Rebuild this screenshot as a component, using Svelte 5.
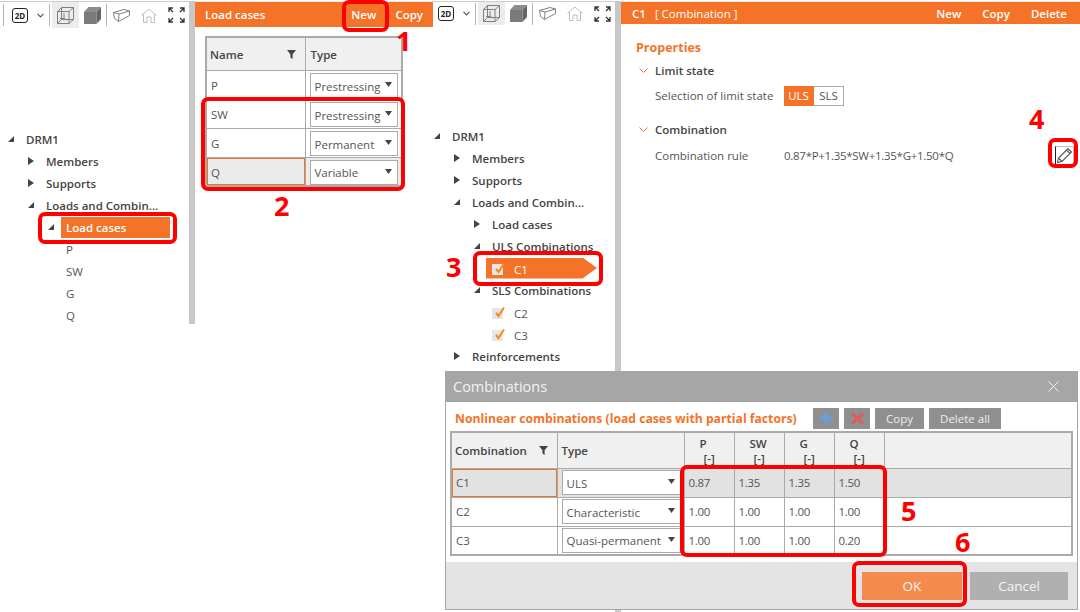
<script>
  const tree1 = [
    { t: 'DRM1', lvl: 0, arrow: 'open', bold: true },
    { t: 'Members', lvl: 1, arrow: 'closed', bold: true },
    { t: 'Supports', lvl: 1, arrow: 'closed', bold: true },
    { t: 'Loads and Combin...', lvl: 1, arrow: 'open', bold: true },
    { t: 'Load cases', lvl: 2, arrow: 'open', bold: true, sel: true },
    { t: 'P', lvl: 2 },
    { t: 'SW', lvl: 2 },
    { t: 'G', lvl: 2 },
    { t: 'Q', lvl: 2 }
  ];
  const tree2 = [
    { t: 'DRM1', lvl: 0, arrow: 'open', bold: true },
    { t: 'Members', lvl: 1, arrow: 'closed', bold: true },
    { t: 'Supports', lvl: 1, arrow: 'closed', bold: true },
    { t: 'Loads and Combin...', lvl: 1, arrow: 'open', bold: true },
    { t: 'Load cases', lvl: 2, arrow: 'closed', bold: true },
    { t: 'ULS Combinations', lvl: 2, arrow: 'open', bold: true },
    { t: 'C1', lvl: 2, check: true, tag: true },
    { t: 'SLS Combinations', lvl: 2, arrow: 'open', bold: true },
    { t: 'C2', lvl: 2, check: true },
    { t: 'C3', lvl: 2, check: true },
    { t: 'Reinforcements', lvl: 1, arrow: 'closed', bold: true }
  ];
  const cases = [
    { n: 'P', ty: 'Prestressing' },
    { n: 'SW', ty: 'Prestressing' },
    { n: 'G', ty: 'Permanent' },
    { n: 'Q', ty: 'Variable', active: true }
  ];
  const combos = [
    { n: 'C1', ty: 'ULS', v: ['0.87', '1.35', '1.35', '1.50'], active: true },
    { n: 'C2', ty: 'Characteristic', v: ['1.00', '1.00', '1.00', '1.00'] },
    { n: 'C3', ty: 'Quasi-permanent', v: ['1.00', '1.00', '1.00', '0.20'] }
  ];
  const factors = ['P', 'SW', 'G', 'Q'];
</script>

{#snippet caret()}
  <svg class="caret" width="7" height="5" viewBox="0 0 7 5"><path d="M0 0h7L3.5 5z" fill="#444" /></svg>
{/snippet}

{#snippet funnel()}
  <svg class="funnel" width="9" height="9" viewBox="0 0 9 9"><path d="M0 0h9L5.6 4.2V9L3.4 7.6V4.2z" fill="#444" /></svg>
{/snippet}

{#snippet toolbar(lead)}
  <div class="tools">
    {#if lead}<span class="sep lead"></span>{/if}
    <span class="icon2d">2D</span>
    <svg class="chev" width="7" height="5" viewBox="0 0 7 5"><path d="M.5.8 3.5 3.8 6.5.8" fill="none" stroke="#555" stroke-width="1.2" /></svg>
    <span class="sep s1"></span>
    <span class="hi">
      <svg width="17" height="17" viewBox="0 0 17 17" fill="none" stroke="#808080"><path d="M.5 4.500h11.500v12H.5zM4.500.5h12v12H4.500zM.5 4.500l4-4M12 4.500l4.500-4M12 16.500l4.500-4M.5 16.500l4-4M7 6v5.500H3M7 11.500l3 1.500" /></svg>
    </span>
    <svg class="cube" width="17" height="17" viewBox="0 0 17 17"><path d="M0 5h12.500v12H0z" fill="#7a7a7a" /><path d="M0 5l4.500-5H17l-4.500 5z" fill="#8c8c8c" /><path d="M12.500 5 17 0v12l-4.500 5z" fill="#666" /></svg>
    <span class="sep s2"></span>
    <svg class="beam" width="17" height="13" viewBox="0 0 17 13" fill="none" stroke="#808080"><path d="M.5 3.500 11 .5l5.500 1.500L6 5zM.5 3.500 1.500 9.500 5.500 12.500 6 5M5.500 12.500l11-6V2" /></svg>
    <svg class="home" width="16" height="15" viewBox="0 0 16 15" fill="none" stroke="#bdbdbd"><path d="M.5 7.500 8 1l7.500 6.500M2.500 6v8.500h3.500V9h4v5.500h3.500V6" /></svg>
    <svg class="expand" width="17" height="16" viewBox="0 0 17 16" fill="none" stroke="#333" stroke-width="1.300"><path d="M1 5V1h4M1 1l4 4M12 1h4v4M16 1l-4 4M1 11v4h4M1 15l4-4M12 15h4v-4M16 15l-4-4" /></svg>
  </div>
{/snippet}

{#snippet treeRows(rows)}
  <div class="tree">
    {#each rows as r}
      <div class="row" class:l1={r.lvl === 1} class:l2={r.lvl === 2}>
        <span class="arrowbox">
          {#if r.arrow === 'closed'}
            <svg width="6" height="8" viewBox="0 0 6 8"><path d="M0 0l6 4-6 4z" fill="#444" /></svg>
          {:else if r.arrow === 'open'}
            <svg width="6" height="6" viewBox="0 0 6 6"><path d="M6 0v6H0z" fill="#444" /></svg>
          {/if}
        </span>
        {#if r.check}
          <span class="entry" class:tag={r.tag}>
            <span class="check">
              <svg width="13" height="13" viewBox="0 0 13 13"><path d="M3 7l2.500 3L11 1.500" fill="none" stroke="#f5891f" stroke-width="2" /></svg>
            </span>
            <span class="ctext">{r.t}</span>
          </span>
        {:else}
          <span class="entry" class:b={r.bold} class:sel={r.sel}>{r.t}</span>
        {/if}
      </div>
    {/each}
  </div>
{/snippet}

<div class="screen">
  <section class="pane p1">
    {@render toolbar(true)}
    {@render treeRows(tree1)}
  </section>
  <div class="sb short"></div>

  <section class="pane p2">
    <header class="bar tall">
      <strong class="title">Load cases</strong>
      <span class="acts"><b>New</b><b>Copy</b></span>
    </header>
    <table class="lc">
      <thead>
        <tr>
          <th class="cn"><span class="hcell">Name{@render funnel()}</span></th>
          <th class="ty">Type</th>
        </tr>
      </thead>
      <tbody>
        {#each cases as c}
          <tr class:on={c.active}>
            <td class="namec" class:focus={c.active}>{c.n}</td>
            <td><div class="sel-box"><span>{c.ty}</span>{@render caret()}</div></td>
          </tr>
        {/each}
      </tbody>
    </table>
  </section>

  <section class="pane p3">
    {@render toolbar(false)}
    {@render treeRows(tree2)}
  </section>
  <div class="sb"></div>

  <section class="pane p4">
    <header class="bar">
      <strong class="title c1">C1</strong>
      <span class="kind">[ Combination ]</span>
      <span class="acts wide"><b>New</b><b>Copy</b><b>Delete</b></span>
    </header>
    <div class="props">
      <h3>Properties</h3>
      <div class="group">
        <svg width="9" height="5" viewBox="0 0 9 5"><path d="M.5.5l4 4 4-4" fill="none" stroke="#f47a30" /></svg>
        <span>Limit state</span>
      </div>
      <div class="prop first">
        <span class="lab">Selection of limit state</span>
        <span class="toggle"><span class="on">ULS</span><span>SLS</span></span>
      </div>
      <div class="group second">
        <svg width="9" height="5" viewBox="0 0 9 5"><path d="M.5.5l4 4 4-4" fill="none" stroke="#f47a30" /></svg>
        <span>Combination</span>
      </div>
      <div class="prop rule">
        <span class="lab">Combination rule</span>
        <span class="val">0.87*P+1.35*SW+1.35*G+1.50*Q</span>
        <span class="edit">
          <svg width="17" height="17" viewBox="0 0 17 17" fill="none" stroke="#555" stroke-width="1.100"><path d="M1.500 15.500l1-4.500L12 1.500l3.500 3.500-9.500 9.500zM2.500 11l3.500 3.500M10.500 3l3.500 3.500" /></svg>
        </span>
      </div>
    </div>
  </section>

  <div class="dialog">
    <div class="dtitle">
      <span>Combinations</span>
      <svg width="11" height="11" viewBox="0 0 11 11"><path d="M.5.500l10 10M10.500.500l-10 10" stroke="#f4f4f4" /></svg>
    </div>
    <div class="dbody">
      <div class="dhead">
        <strong>Nonlinear combinations (load cases with partial factors)</strong>
        <span class="dbtns">
          <span class="dbtn sq">
            <svg width="13" height="13" viewBox="0 0 13 13"><path d="M4.500 0h4v4.500H13v4H8.500V13h-4V8.500H0v-4h4.500z" fill="#6f9bd3" /></svg>
          </span>
          <span class="dbtn sq">
            <svg width="13" height="13" viewBox="0 0 13 13"><path d="M2 .500l4.500 4 4.500-4 2 2-4 4 4 4-2 2-4.500-4-4.500 4-2-2 4-4-4-4z" fill="#e35a5e" /></svg>
          </span>
          <span class="dbtn copy">Copy</span>
          <span class="dbtn del">Delete all</span>
        </span>
      </div>
      <table class="ct">
        <thead>
          <tr>
            <th class="c-n"><span class="hcell">Combination{@render funnel()}</span></th>
            <th class="c-t">Type</th>
            {#each factors as f}
              <th class="c-f"><span class="f1">{f}</span><span class="f2">[-]</span></th>
            {/each}
            <th></th>
          </tr>
        </thead>
        <tbody>
          {#each combos as c}
            <tr class:on={c.active}>
              <td class:focus={c.active}>{c.n}</td>
              <td><div class="sel-box"><span>{c.ty}</span>{@render caret()}</div></td>
              {#each c.v as v}<td class="numc">{v}</td>{/each}
              <td></td>
            </tr>
          {/each}
        </tbody>
      </table>
    </div>
    <div class="dfoot">
      <span class="btn ok">OK</span>
      <span class="btn cancel">Cancel</span>
    </div>
  </div>

  <div class="frame f-new"></div>
  <div class="frame f-rows"></div>
  <div class="frame f-lc"></div>
  <div class="frame f-c1"></div>
  <div class="frame f-edit"></div>
  <div class="frame f-vals"></div>
  <div class="frame f-ok"></div>
  <span class="num n1">1</span>
  <span class="num n2">2</span>
  <span class="num n3">3</span>
  <span class="num n4">4</span>
  <span class="num n5">5</span>
  <span class="num n6">6</span>
</div>

<style>
  :global(body) { margin: 0; background: #fff; }
  .screen {
    position: relative;
    width: 1080px;
    height: 612px;
    overflow: hidden;
    display: grid;
    grid-template-columns: 189px 6px 238px 182px 6px 1fr;
    font-family: "Open Sans", "Noto Sans", sans-serif;
    font-size: 11.5px;
    color: #444;
    padding-top: 1px;
    box-sizing: border-box;
  }
  .pane { border-top: 1px solid #ccc; min-width: 0; }
  .sb { background: #c8c8c8; height: 611px; }
  .sb.short { height: 323px; }
  .p2, .p4 { border-top-color: #e8e8e8; }

  .tools { display: flex; align-items: center; height: 26px; padding-left: 5px; }
  .p1 .tools { padding-left: 3px; }
  .p3 .tools { height: 23px; }
  .sep { width: 1px; height: 22px; background: #b5b5b5; flex: none; }
  .sep.lead { margin-right: 8px; }
  .icon2d {
    width: 16px; height: 15px; box-sizing: border-box; border: 1px solid #222; border-radius: 3px;
    font: 700 8px/13px "Open Sans", sans-serif; color: #222; text-align: center; flex: none;
  }
  .chev { margin-left: 9px; flex: none; }
  .s1 { margin-left: 5px; }
  .hi { margin-left: 2px; width: 27px; align-self: stretch; background: #ececec; display: flex; align-items: center; justify-content: center; flex: none; }
  .cube { margin-left: 5px; flex: none; }
  .s2 { margin-left: 5px; }
  .beam { margin-left: 6px; flex: none; }
  .home { margin-left: 11px; flex: none; }
  .expand { margin-left: 11px; flex: none; }

  .tree { padding: 100px 0 0 8px; }
  .p3 .tree { padding-left: 1px; }
  .row { display: flex; align-items: center; height: 22px; white-space: nowrap; }
  .row.l1 { padding-left: 20px; }
  .row.l2 { padding-left: 40px; }
  .arrowbox { width: 18px; flex: none; display: flex; align-items: center; }
  .entry { color: #555; }
  .entry.b { font-weight: 600; color: #444; }
  .entry.sel {
    background: #f47328; color: #fff; margin-left: -5px; padding-left: 5px; width: 104px;
    height: 21px; line-height: 21px;
  }
  .entry:has(.check) { display: flex; align-items: center; height: 21px; }
  .check {
    position: relative; width: 11px; height: 11px; background: #e6e6e6; display: block; flex: none; margin-top: 3px;
  }
  .check svg { position: absolute; left: 1px; top: -2px; }
  .ctext { margin-left: 11px; padding-top: 3px; }
  .entry.tag {
    background: #f47328; color: #fff; margin-left: -6px; padding-left: 6px; width: 105px;
    clip-path: polygon(0 0, 87% 0, 100% 50%, 87% 100%, 0 100%);
  }

  .bar {
    display: flex; align-items: center; height: 22px; background: #f47328; color: #fff;
  }
  .bar.tall { height: 25px; }
  .title { font-weight: 600; margin-left: 10px; }
  .title.c1 { margin-left: 11px; }
  .kind { margin-left: 9px; }
  .acts { margin-left: auto; display: flex; gap: 19px; padding-right: 10px; }
  .acts b { font-weight: 600; }
  .acts.wide { gap: 21px; padding-right: 13px; }

  table { border-collapse: collapse; table-layout: fixed; color: #555; }
  th, td { border: 1px solid #aaa; padding: 0; font-weight: 400; box-sizing: border-box; }
  thead th { background: #f0f0f0; color: #444; font-weight: 600; text-align: left; padding-left: 4px; }
  td { padding-left: 4px; background: #fff; }
  .numc { letter-spacing: -0.3px; }
  .namec { padding-top: 2px; }
  .hcell { display: flex; align-items: center; justify-content: space-between; }
  .funnel { flex: none; margin-right: 9px; }
  tr.on td { background: #e2e2e2; }
  td.focus { box-shadow: inset 0 0 0 1px #e8762d; }

  .lc { width: 198px; margin: 9px 0 0 10px; border: 2px solid #aaa; }
  .lc thead th { height: 33px; padding-top: 2px; }
  .lc .cn { width: 99px; padding-left: 3px; }
  .lc .ty { padding-left: 5px; }
  .lc tbody tr { height: 29px; }
  .lc tr.on td { background: #ebebeb; }
  .sel-box {
    display: flex; align-items: center; justify-content: space-between;
    border: 1.500px solid #aaa; background: #fff; height: 25px; box-sizing: border-box;
    padding: 1px 5px 0 4px; margin-right: 3px; white-space: nowrap; overflow: hidden;
  }
  .lc .sel-box { margin-top: 2px; }
  .caret { flex: none; margin-bottom: 3px; }

  .props { padding: 15px 0 0 15px; }
  h3 { margin: 0; font-size: 12.500px; line-height: 17px; font-weight: 700; color: #f47328; }
  .group { display: flex; align-items: center; gap: 7px; margin: 6px 0 0 3px; height: 16px; font-weight: 600; color: #444; }
  .group.second { margin-top: 15px; }
  .prop { display: flex; align-items: center; padding-left: 19px; }
  .prop.first { height: 21px; margin-top: 7px; }
  .prop.rule { height: 21px; margin-top: 8px; }
  .lab { width: 129px; flex: none; color: #555; }
  .toggle { display: flex; height: 20px; line-height: 18px; }
  .toggle span { width: 30px; box-sizing: border-box; text-align: center; border: 1px solid #aaa; border-left: 0; color: #555; }
  .toggle .on { background: #f47328; color: #fff; border-color: #f47328; }
  .val { color: #555; letter-spacing: -0.28px; }
  .edit {
    margin-left: auto; margin-right: 6px; width: 19px; height: 20px; box-sizing: border-box;
    border: 1px solid #222; border-right-color: #bbb; border-top-color: #bbb; display: flex; align-items: center; justify-content: center;
  }

  .dialog {
    position: absolute; left: 445px; top: 371px; width: 633px; height: 239px; box-sizing: border-box;
    background: #fff; border: 1px solid #a6a6a6; border-top: 0; display: flex; flex-direction: column;
  }
  .dtitle {
    height: 31px; flex: none; background: #a6a6a6; color: #f2f2f2; font-size: 14.500px;
    display: flex; align-items: center; justify-content: space-between; padding: 0 18px 0 7px;
  }
  .dbody { flex: 1; padding: 6px 4px 0 4px; }
  .dhead { display: flex; align-items: center; height: 21px; margin-bottom: 2px; }
  .dhead strong { font-size: 12.200px; font-weight: 700; color: #f47328; margin-left: 5px; white-space: nowrap; }
  .dbtns { margin-left: auto; display: flex; gap: 5px; margin-right: 72px; }
  .dbtn {
    height: 21px; background: #8f8f8f; color: #eee; display: flex; align-items: center; justify-content: center;
  }
  .dbtn.sq { width: 26px; }
  .dbtn.copy { width: 49px; }
  .dbtn.del { width: 72px; }
  .ct { width: 623px; border: 2px solid #aaa; }
  .ct thead th { height: 36px; }
  .ct .c-n { width: 106px; padding-left: 3px; }
  .ct .c-t { width: 127px; }
  .ct .c-f { width: 50px; padding: 3px 0 0; font-size: 11.500px; line-height: 15px; vertical-align: top; overflow: hidden; }
  .f1 { display: block; padding-left: 15px; }
  .f2 { display: block; padding-left: 19px; font-weight: 600; }
  .ct tbody tr { height: 29px; }
  .ct .sel-box { height: 25px; }
  .dfoot {
    height: 47px; flex: none; background: #e4e4e4; box-sizing: border-box; padding: 10px 9px 0 0;
    display: flex; justify-content: flex-end; gap: 8px;
  }
  .btn {
    height: 28px; line-height: 28px; color: #f4f4f4; text-align: center; font-size: 13.500px;
  }
  .ok { width: 100px; background: #f48a4d; }
  .cancel { width: 98px; background: #b0b0b0; }

  .frame { position: absolute; box-sizing: border-box; border: 4px solid #f00; border-radius: 7px; }
  .f-new { left: 342px; top: 0; width: 47px; height: 32px; }
  .f-rows { left: 201px; top: 97px; width: 204px; height: 94px; }
  .f-lc { left: 38px; top: 212px; width: 139px; height: 32px; }
  .f-c1 { left: 473px; top: 251px; width: 130px; height: 35px; }
  .f-edit { left: 1048px; top: 138px; width: 30px; height: 30px; }
  .f-vals { left: 680px; top: 465px; width: 207px; height: 92px; }
  .f-ok { left: 852px; top: 561px; width: 115px; height: 46px; }
  .num { position: absolute; font: 700 27px/20px "Open Sans", sans-serif; color: #f00; }
  .n1 { left: 396px; top: 31px; }
  .n2 { left: 274px; top: 196px; }
  .n3 { left: 446px; top: 257px; }
  .n4 { left: 1029px; top: 109px; }
  .n5 { left: 901px; top: 501px; }
  .n6 { left: 955px; top: 532px; }
</style>
